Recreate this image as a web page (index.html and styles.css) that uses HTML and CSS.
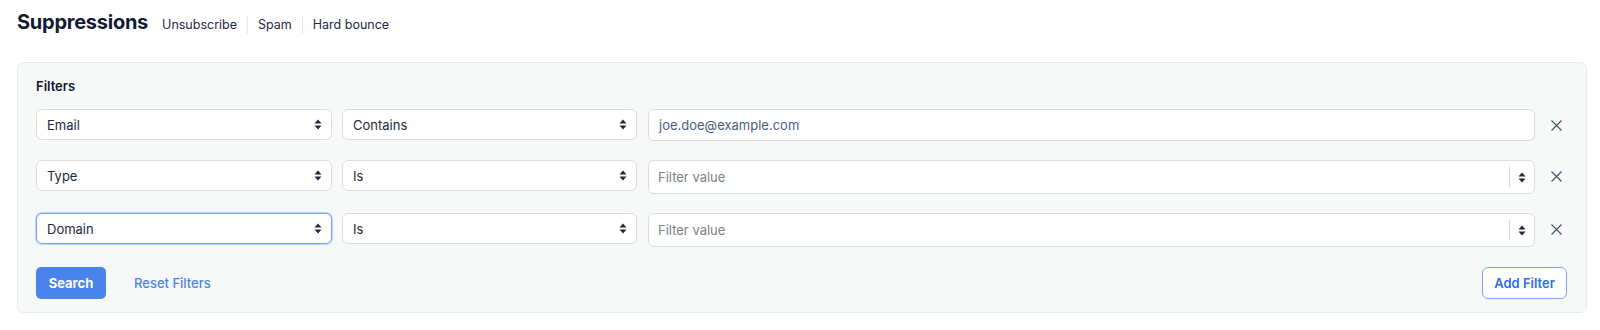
FILE: index.html
```html
<!DOCTYPE html>
<html lang="en">
<head>
  <meta charset="UTF-8">
  <title>Suppressions</title>
  <link rel="stylesheet" href="styles.css">
</head>
<body>

  <div class="page">
    <header class="page-header">
      <h1>Suppressions</h1>
      <nav class="tabs">
        <a href="#">Unsubscribe</a>
        <a href="#">Spam</a>
        <a href="#">Hard bounce</a>
      </nav>
    </header>

    <section class="filters">
      <h2>Filters</h2>

      <div class="filter-row">
        <div class="select field-col">
          <span>Email</span>
          <svg class="caret" width="8" height="11" viewBox="0 0 8 11"><path d="M4 0.5L7.5 4.5H0.5Z M4 10.5L7.5 6.5H0.5Z" fill="#1e293b"/></svg>
        </div>
        <div class="select op-col">
          <span>Contains</span>
          <svg class="caret" width="8" height="11" viewBox="0 0 8 11"><path d="M4 0.5L7.5 4.5H0.5Z M4 10.5L7.5 6.5H0.5Z" fill="#1e293b"/></svg>
        </div>
        <div class="text-input value-col">
          <span class="value">joe.doe@example.com</span>
        </div>
        <button class="remove" type="button">
          <svg width="11" height="11" viewBox="0 0 11 11"><path d="M0.5 0.5L10.5 10.5M10.5 0.5L0.5 10.5" stroke="#475569" stroke-width="1.2"/></svg>
        </button>
      </div>

      <div class="filter-row">
        <div class="select field-col">
          <span>Type</span>
          <svg class="caret" width="8" height="11" viewBox="0 0 8 11"><path d="M4 0.5L7.5 4.5H0.5Z M4 10.5L7.5 6.5H0.5Z" fill="#1e293b"/></svg>
        </div>
        <div class="select op-col">
          <span>Is</span>
          <svg class="caret" width="8" height="11" viewBox="0 0 8 11"><path d="M4 0.5L7.5 4.5H0.5Z M4 10.5L7.5 6.5H0.5Z" fill="#1e293b"/></svg>
        </div>
        <div class="combo value-col">
          <span class="placeholder">Filter value</span>
          <span class="combo-sep"></span>
          <svg class="caret" width="8" height="11" viewBox="0 0 8 11"><path d="M4 0.5L7.5 4.5H0.5Z M4 10.5L7.5 6.5H0.5Z" fill="#1e293b"/></svg>
        </div>
        <button class="remove" type="button">
          <svg width="11" height="11" viewBox="0 0 11 11"><path d="M0.5 0.5L10.5 10.5M10.5 0.5L0.5 10.5" stroke="#475569" stroke-width="1.2"/></svg>
        </button>
      </div>

      <div class="filter-row">
        <div class="select field-col focused">
          <span>Domain</span>
          <svg class="caret" width="8" height="11" viewBox="0 0 8 11"><path d="M4 0.5L7.5 4.5H0.5Z M4 10.5L7.5 6.5H0.5Z" fill="#1e293b"/></svg>
        </div>
        <div class="select op-col">
          <span>Is</span>
          <svg class="caret" width="8" height="11" viewBox="0 0 8 11"><path d="M4 0.5L7.5 4.5H0.5Z M4 10.5L7.5 6.5H0.5Z" fill="#1e293b"/></svg>
        </div>
        <div class="combo value-col">
          <span class="placeholder">Filter value</span>
          <span class="combo-sep"></span>
          <svg class="caret" width="8" height="11" viewBox="0 0 8 11"><path d="M4 0.5L7.5 4.5H0.5Z M4 10.5L7.5 6.5H0.5Z" fill="#1e293b"/></svg>
        </div>
        <button class="remove" type="button">
          <svg width="11" height="11" viewBox="0 0 11 11"><path d="M0.5 0.5L10.5 10.5M10.5 0.5L0.5 10.5" stroke="#475569" stroke-width="1.2"/></svg>
        </button>
      </div>

      <div class="filter-actions">
        <button class="btn-primary" type="button">Search</button>
        <a class="reset-link" href="#">Reset Filters</a>
        <button class="btn-outline" type="button">Add Filter</button>
      </div>
    </section>
  </div>

</body>
</html>
```

FILE: styles.css
```css
/* Global reset */
* {
  margin: 0;
  padding: 0;
  box-sizing: border-box;
  font-family: 'Inter', 'Liberation Sans', sans-serif;
}

body {
  background-color: #ffffff;
  color: #1e293b;
}

.page {
  padding: 10px 13px 0 17px;
}

/* Header */
.page-header {
  display: flex;
  align-items: baseline;
  margin-bottom: 28px;
}

.page-header h1 {
  font-size: 20px;
  line-height: 24px;
  font-weight: 700;
  letter-spacing: -0.25px;
  color: #111c33;
  margin-right: 4px;
}

.tabs {
  display: flex;
  align-items: baseline;
}

.tabs a {
  font-size: 12.5px;
  line-height: 18px;
  color: #1f2a44;
  text-decoration: none;
  padding: 0 10px;
  border-left: 1px solid #e6e8eb;
}

.tabs a:first-child {
  border-left: none;
}

/* Filters panel */
.filters {
  background-color: #f7f8f8;
  border: 1px solid #e8eaec;
  border-radius: 7px;
  padding: 15px 19px 13px 18px;
}

.filters h2 {
  font-size: 13px;
  line-height: 16px;
  font-weight: 600;
  color: #111827;
  margin-bottom: 15px;
}

.filter-row {
  display: flex;
  align-items: flex-start;
  margin-bottom: 19px;
}

.filter-row:nth-of-type(3) {
  margin-bottom: 20px;
}

.select,
.text-input,
.combo {
  display: flex;
  align-items: center;
  background-color: #ffffff;
  border: 1px solid #d9dde2;
  border-radius: 6px;
  font-size: 13px;
  color: #1e293b;
}

.select {
  height: 31px;
  padding: 0 9px 0 10px;
  justify-content: space-between;
}

.select.focused {
  border-color: #79a3f4;
  box-shadow: 0 0 0 1px rgba(121, 163, 244, 0.45);
}

.field-col { width: 296px; margin-right: 10px; }
.op-col    { width: 295px; margin-right: 11px; }
.value-col { flex: 1; }

.text-input {
  height: 32px;
  padding: 0 10px;
}

.text-input .value { color: #4b5d7c; }

.combo {
  height: 34px;
  padding: 0 8px 0 9px;
}

.combo .placeholder {
  flex: 1;
  color: #7b818b;
}

.combo-sep {
  width: 1px;
  height: 20px;
  background-color: #d0d4d9;
  margin-right: 8px;
}

.remove {
  width: 32px;
  height: 32px;
  padding-left: 10px;
  display: flex;
  align-items: center;
  justify-content: center;
  border: none;
  background: none;
  cursor: pointer;
}

/* Actions */
.filter-actions {
  display: flex;
  align-items: center;
}

.btn-primary {
  height: 32px;
  width: 70px;
  background-color: #4a83ea;
  color: #ffffff;
  border: none;
  border-radius: 5px;
  font-size: 13px;
  font-weight: 700;
  cursor: pointer;
}

.reset-link {
  margin-left: 28px;
  font-size: 13px;
  font-weight: 500;
  color: #4a84e6;
  text-decoration: none;
}

.btn-outline {
  margin-left: auto;
  height: 32px;
  width: 85px;
  background-color: #ffffff;
  color: #2f6fdf;
  border: 1px solid #7fa6ef;
  border-radius: 6px;
  font-size: 13px;
  font-weight: 600;
  cursor: pointer;
}
```
